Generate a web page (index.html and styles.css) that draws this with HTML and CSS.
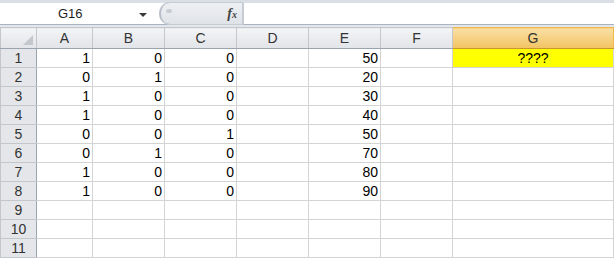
FILE: index.html
```html
<!DOCTYPE html>
<html lang="en">
<head>
    <title>Sheet1</title>
    <link rel="stylesheet" href="styles.css">
</head>
<body>
<div class="toolbar">
    <div class="namebox">
        <span class="cellref">G16</span>
        <span class="arrow"></span>
    </div>
    <div class="grip">
        <span class="knob"></span>
        <span class="fx"><i>f</i><i class="x">x</i></span>
    </div>
    <div class="formula"></div>
</div>
<table class="sheet">
    <colgroup>
        <col class="c-hdr"><col class="c-a"><col class="c-n"><col class="c-n"><col class="c-n"><col class="c-n"><col class="c-n"><col class="c-g">
    </colgroup>
    <thead>
    <tr>
        <th class="corner"><span class="tri"></span></th>
        <th>A</th><th>B</th><th>C</th><th>D</th><th>E</th><th>F</th><th class="sel">G</th>
    </tr>
    </thead>
    <tbody>
    <tr><th>1</th><td>1</td><td>0</td><td>0</td><td></td><td>50</td><td></td><td class="mark">????</td></tr>
    <tr><th>2</th><td>0</td><td>1</td><td>0</td><td></td><td>20</td><td></td><td></td></tr>
    <tr><th>3</th><td>1</td><td>0</td><td>0</td><td></td><td>30</td><td></td><td></td></tr>
    <tr><th>4</th><td>1</td><td>0</td><td>0</td><td></td><td>40</td><td></td><td></td></tr>
    <tr><th>5</th><td>0</td><td>0</td><td>1</td><td></td><td>50</td><td></td><td></td></tr>
    <tr><th>6</th><td>0</td><td>1</td><td>0</td><td></td><td>70</td><td></td><td></td></tr>
    <tr><th>7</th><td>1</td><td>0</td><td>0</td><td></td><td>80</td><td></td><td></td></tr>
    <tr><th>8</th><td>1</td><td>0</td><td>0</td><td></td><td>90</td><td></td><td></td></tr>
    <tr><th>9</th><td></td><td></td><td></td><td></td><td></td><td></td><td></td></tr>
    <tr><th>10</th><td></td><td></td><td></td><td></td><td></td><td></td><td></td></tr>
    <tr><th>11</th><td></td><td></td><td></td><td></td><td></td><td></td><td></td></tr>
    </tbody>
</table>
</body>
</html>
```

FILE: styles.css
```css
body {
  margin: 0;
  width: 614px;
  height: 258px;
  overflow: hidden;
  background: #ffffff;
  font-family: "Liberation Sans", Arial, sans-serif;
}
.toolbar {
  display: flex;
  height: 22px;
  border-top: 3px solid #dadfe6;
  border-bottom: 2px solid #e3e6ea;
  box-shadow: inset 0 -1px 0 #a9b3c0;
  background: #ffffff;
}
.namebox {
  width: 155px;
  display: flex;
  align-items: center;
  justify-content: space-between;
  padding-right: 8px;
  box-sizing: border-box;
  border-bottom: 1px solid #a9b3c0;
}
.cellref {
  margin-left: 58px;
  font-size: 13px;
  color: #1e1e1e;
}
.arrow {
  width: 0;
  height: 0;
  border-left: 4px solid transparent;
  border-right: 4px solid transparent;
  border-top: 4px solid #3b3b3b;
  margin-top: 2px;
}
.grip {
  width: 84px;
  margin-left: 4px;
  display: flex;
  align-items: center;
  justify-content: space-between;
  background: linear-gradient(#eef0f3, #dfe3e8);
  border: 1px solid #c6ccd4;
  border-left: none;
  border-radius: 11px 0 0 11px;
  box-sizing: border-box;
  height: 23px;
  margin-top: -1px;
}
.knob {
  width: 16px;
  height: 21px;
  border-radius: 11px 0 0 11px;
  border-left: 2px solid #b8bfc8;
  box-sizing: border-box;
  position: relative;
}
.knob::after {
  content: "";
  position: absolute;
  left: 5px;
  top: 6px;
  width: 6px;
  height: 4px;
  border-radius: 50%;
  background: #c7ccd3;
}
.fx {
  font-family: "Liberation Serif", "Times New Roman", serif;
  font-weight: bold;
  font-size: 14px;
  color: #444;
  margin-right: 5px;
}
.fx .x {
  font-size: 10px;
}
.formula {
  flex: 1;
  border-left: 1px solid #c6ccd4;
  border-bottom: 1px solid #a9b3c0;
}
.sheet {
  border-collapse: collapse;
  table-layout: fixed;
  width: 613px;
  font-size: 14px;
  color: #000;
}
.c-hdr { width: 36px; }
.c-a { width: 56px; }
.c-n { width: 72px; }
.c-g { width: 161px; }
.sheet th {
  height: 18px;
  padding: 0;
  font-weight: normal;
  color: #333;
  background: #e4e6e9;
  border: 1px solid #c3c7cc;
  text-align: center;
  font-size: 14px;
}
.sheet thead th {
  height: 20px;
  background: linear-gradient(#f3f4f6, #e1e4e8);
  border-color: #c3c7cc;
  border-bottom-color: #9aa3ae;
}
.sheet thead th.sel {
  background: linear-gradient(#fadfa5, #f2c462);
  border-color: #f0b84c;
  border-bottom-color: #c8952e;
}
.sheet tbody th {
  border-right-color: #9aa3ae;
}
.corner {
  position: relative;
}
.tri {
  position: absolute;
  right: 3px;
  bottom: 3px;
  width: 0;
  height: 0;
  border-left: 10px solid transparent;
  border-bottom: 10px solid #c4c8ce;
}
.sheet td {
  height: 18px;
  padding: 0 2px 0 0;
  text-align: right;
  border: 1px solid #d4d4d4;
  white-space: nowrap;
}
.sheet td.mark {
  background: #ffff00;
  text-align: center;
  padding: 0;
}
```
